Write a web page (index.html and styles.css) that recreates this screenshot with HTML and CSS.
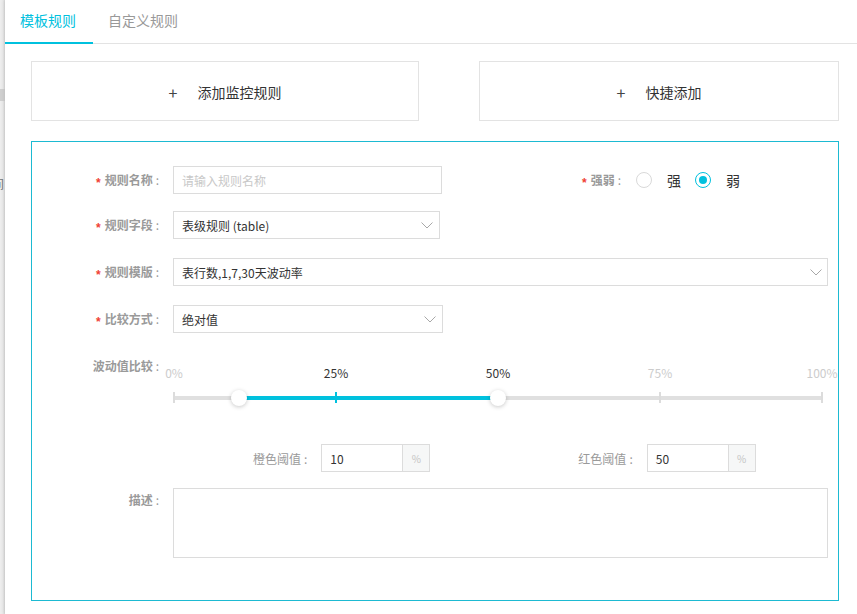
FILE: index.html
```html
<!DOCTYPE html>
<html lang="zh-CN">
<head>
<meta charset="utf-8">
<title>模板规则</title>
<link rel="stylesheet" href="styles.css">
</head>
<body>
<div class="screen">
  <div class="backdrop">
    <div class="bd-block"></div>
    <div class="bd-char">间</div>
  </div>
  <div class="drawer">
    <div class="tabs">
      <div class="tab active">模板规则</div>
      <div class="tab">自定义规则</div>
    </div>
    <div class="content">
      <div class="actions">
        <div class="add-btn add-main"><span class="plus">+</span>添加监控规则</div>
        <div class="add-btn add-quick"><span class="plus">+</span>快捷添加</div>
      </div>
      <div class="panel">
        <div class="row r1">
          <div class="label req">规则名称<span class="colon">:</span></div>
          <div class="field w-name placeholder">请输入规则名称</div>
          <div class="strength">
            <div class="label-inline req">强弱<span class="colon">:</span></div>
            <span class="radio"></span><span class="radio-text">强</span>
            <span class="radio checked"></span><span class="radio-text">弱</span>
          </div>
        </div>
        <div class="row r2">
          <div class="label req">规则字段<span class="colon">:</span></div>
          <div class="field w-field">表级规则 (table)
            <svg class="chev" width="12" height="7" viewBox="0 0 12 7"><polyline points="0.5,0.5 6,6 11.5,0.5" fill="none" stroke="#a8a8a8" stroke-width="1"/></svg>
          </div>
        </div>
        <div class="row r3">
          <div class="label req">规则模版<span class="colon">:</span></div>
          <div class="field w-tpl">表行数,1,7,30天波动率
            <svg class="chev" width="12" height="7" viewBox="0 0 12 7"><polyline points="0.5,0.5 6,6 11.5,0.5" fill="none" stroke="#a8a8a8" stroke-width="1"/></svg>
          </div>
        </div>
        <div class="row r4">
          <div class="label req">比较方式<span class="colon">:</span></div>
          <div class="field w-cmp">绝对值
            <svg class="chev" width="12" height="7" viewBox="0 0 12 7"><polyline points="0.5,0.5 6,6 11.5,0.5" fill="none" stroke="#a8a8a8" stroke-width="1"/></svg>
          </div>
        </div>
        <div class="row row-slider">
          <div class="label slider-label">波动值比较<span class="colon">:</span></div>
          <div class="slider">
            <div class="track"></div>
            <div class="track-active" style="left:10%;width:40%"></div>
            <span class="tick" style="left:0%"></span>
            <span class="tick on" style="left:25%"></span>
            <span class="tick" style="left:75%"></span>
            <span class="tick" style="left:100%"></span>
            <span class="handle" style="left:10%"></span>
            <span class="handle" style="left:50%"></span>
            <span class="mark" style="left:0%">0%</span>
            <span class="mark on" style="left:25%">25%</span>
            <span class="mark on" style="left:50%">50%</span>
            <span class="mark" style="left:75%">75%</span>
            <span class="mark" style="left:100%">100%</span>
          </div>
        </div>
        <div class="row row-thresh">
          <div class="label-plain">橙色阈值<span class="colon">:</span></div>
          <div class="num">10</div><div class="addon">%</div>
          <div class="label-plain red-label">红色阈值<span class="colon">:</span></div>
          <div class="num">50</div><div class="addon">%</div>
        </div>
        <div class="row row-desc">
          <div class="label desc-label">描述<span class="colon">:</span></div>
          <div class="textarea"></div>
        </div>
      </div>
    </div>
  </div>
</div>
</body>
</html>
```
FILE: styles.css
```css
html, body {
  margin: 0;
  padding: 0;
  background: #fff;
  font-family: "Noto Sans CJK SC", "Noto Sans", sans-serif;
}

.screen {
  display: flex;
  width: 857px;
  height: 614px;
  overflow: hidden;
}

.backdrop {
  width: 5px;
  flex: none;
  display: flex;
  flex-direction: column;
  overflow: hidden;
  background: linear-gradient(to right, #eeeeee 0, #e8e8e8 3px, #d6d6d6 5px);
}

.bd-block {
  margin-top: 89px;
  height: 12px;
  background: #cfcfcf;
}

.bd-char {
  margin-top: 76px;
  margin-left: -8px;
  width: 13px;
  font-size: 12px;
  line-height: 14px;
  color: #777;
}

.drawer {
  flex: 1;
  display: flex;
  flex-direction: column;
  background: #fff;
  box-shadow: -1px 0 3px rgba(0, 0, 0, 0.08);
}

.tabs {
  display: flex;
  height: 43px;
  border-bottom: 1px solid #e3e3e3;
}

.tab {
  height: 44px;
  box-sizing: border-box;
  padding: 0 16px 0 15px;
  font-size: 14px;
  line-height: 40px;
  color: #999;
}

.tab.active {
  color: #00c1de;
  border-bottom: 2px solid #00c1de;
  padding-right: 17px;
}

.content {
  padding: 17px 18px 0 26px;
}

.actions {
  display: flex;
  justify-content: space-between;
}

.add-btn {
  height: 60px;
  box-sizing: border-box;
  border: 1px solid #e3e3e3;
  display: flex;
  align-items: center;
  justify-content: center;
  font-size: 14px;
  color: #333;
  padding-top: 1px;
}

.add-main { width: 388px; }
.add-quick { width: 360px; }

.plus {
  font-size: 16px;
  margin-right: 20px;
  color: #444;
}

.panel {
  margin-top: 20px;
  border: 1px solid #1dbad2;
  padding: 24px 0 42px;
}

.row {
  display: flex;
  align-items: center;
}

.r2 { margin-top: 17px; }
.r3 { margin-top: 19px; }
.r4 { margin-top: 19px; }
.row-slider { margin-top: 27px; align-items: flex-start; }
.row-thresh { margin-top: 28px; padding-left: 221px; }
.row-desc { margin-top: 16px; align-items: flex-start; }

.label {
  width: 127px;
  flex: none;
  margin-right: 14px;
  text-align: right;
  font-size: 12px;
  font-weight: bold;
  color: #9a9a9a;
  white-space: nowrap;
}

.label-inline {
  font-size: 12px;
  font-weight: bold;
  color: #9a9a9a;
  white-space: nowrap;
}

.req::before {
  content: "*";
  color: #f04134;
  font-family: "Liberation Sans", sans-serif;
  font-weight: bold;
  margin-right: 4px;
  vertical-align: -2px;
}

.colon {
  margin-left: 3px;
  font-weight: normal;
}

.field {
  height: 28px;
  box-sizing: border-box;
  border: 1px solid #dcdcdc;
  padding: 0 6px 0 8px;
  display: flex;
  align-items: center;
  justify-content: space-between;
  font-size: 12px;
  color: #333;
  white-space: nowrap;
}

.field.placeholder { color: #c8c8c8; }

.w-name { width: 269px; }
.w-field { width: 267px; }
.w-tpl { width: 655px; padding-right: 5px; }
.w-cmp { width: 270px; }

.chev { flex: none; }

.strength {
  margin-left: 140px;
  display: flex;
  align-items: center;
}

.radio {
  width: 16px;
  height: 16px;
  box-sizing: border-box;
  border: 1px solid #d9d9d9;
  border-radius: 50%;
  margin-left: 15px;
  display: flex;
  align-items: center;
  justify-content: center;
}

.radio-text {
  margin-left: 15px;
  margin-right: -1px;
  font-size: 14px;
  color: #333;
}

.radio.checked {
  border-color: #00c1de;
}

.radio.checked::after {
  content: "";
  width: 8px;
  height: 8px;
  border-radius: 50%;
  background: #00c1de;
}

.slider-label {
  line-height: 12px;
}

.slider {
  flex: 1;
  position: relative;
  height: 56px;
  margin: 0 16px 0 1px;
}

.track {
  position: absolute;
  left: 0;
  right: 0;
  top: 36px;
  height: 4px;
  background: #e0e0e0;
}

.track-active {
  position: absolute;
  top: 36px;
  height: 4px;
  background: #00c1de;
}

.tick {
  position: absolute;
  top: 32px;
  width: 2px;
  height: 11px;
  margin-left: -1px;
  background: #dcdcdc;
}

.tick.on { background: #00c1de; }

.handle {
  position: absolute;
  top: 30px;
  width: 16px;
  height: 16px;
  margin-left: -8px;
  border-radius: 50%;
  background: #fff;
  box-shadow: 0 1px 4px rgba(0, 0, 0, 0.22);
}

.mark {
  position: absolute;
  top: 5px;
  transform: translateX(-50%);
  font-size: 12px;
  line-height: 16px;
  color: #cccccc;
  white-space: nowrap;
}

.mark.on { color: #333; }

.label-plain {
  font-size: 12px;
  color: #9a9a9a;
  margin-right: 14px;
  white-space: nowrap;
}

.red-label { margin-left: 148px; }

.num {
  width: 82px;
  height: 28px;
  box-sizing: border-box;
  border: 1px solid #dcdcdc;
  padding-left: 8px;
  display: flex;
  align-items: center;
  font-size: 12px;
  color: #333;
}

.addon {
  width: 27px;
  height: 28px;
  box-sizing: border-box;
  border: 1px solid #dcdcdc;
  border-left: none;
  background: #f6f7f7;
  display: flex;
  align-items: center;
  justify-content: center;
  font-size: 10px;
  color: #c4c4c4;
}

.desc-label {
  padding-top: 6px;
  line-height: 12px;
}

.textarea {
  width: 655px;
  height: 70px;
  box-sizing: border-box;
  border: 1px solid #dcdcdc;
}
```
